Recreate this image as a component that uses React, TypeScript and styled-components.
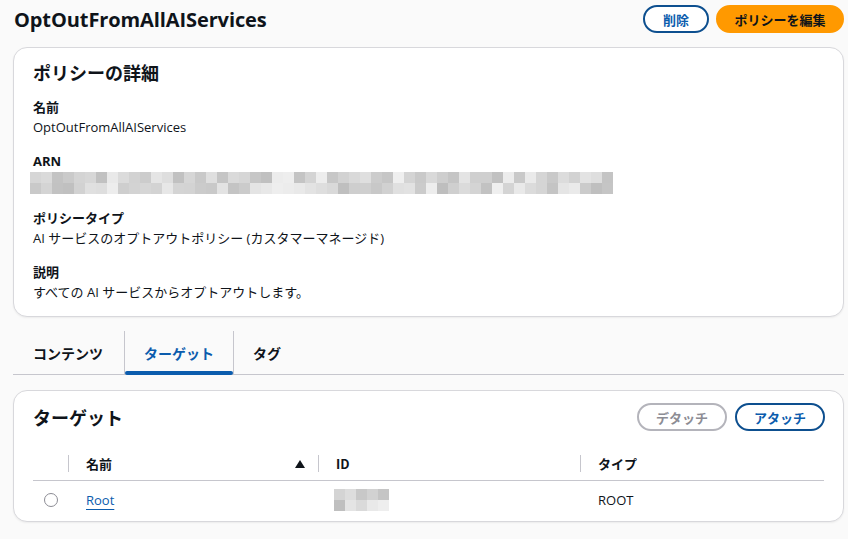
import styled, { createGlobalStyle } from "styled-components";

const GlobalStyle = createGlobalStyle`
  body {
    margin: 0;
    background-color: #fafafa;
    font-family: "Open Sans", "Noto Sans CJK JP", sans-serif;
    color: #0f141a;
  }
`;

export const Page = styled.div`
  width: 848px;
  height: 539px;
  box-sizing: border-box;
  padding: 5px 4px 0 13px;
  overflow: hidden;
`;
export const Header = styled.div`
  display: flex;
  align-items: center;
  justify-content: space-between;
  height: 28px;
`;
export const Title = styled.h1`
  margin: 0 0 0 1px;
  font-size: 20px;
  font-weight: 700;
  letter-spacing: -0.1px;
`;
export const ButtonRow = styled.div<{ $gap?: number }>`
  display: flex;
  gap: ${(p) => p.$gap ?? 7}px;
`;
export const PillButton = styled.button<{ $variant: "normal" | "primary" | "disabled"; $width: number }>`
  height: 28px;
  width: ${(p) => p.$width}px;
  box-sizing: border-box;
  border-radius: 16px;
  font-family: "Noto Sans CJK JP", sans-serif;
  font-size: 13px;
  font-weight: 700;
  padding: 0;
  border: 2px solid
    ${(p) => (p.$variant === "primary" ? "#ff9900" : p.$variant === "disabled" ? "#b4b4bb" : "#0d4f8f")};
  background-color: ${(p) => (p.$variant === "primary" ? "#ff9900" : "#ffffff")};
  color: ${(p) => (p.$variant === "primary" ? "#0f141a" : p.$variant === "disabled" ? "#8c8c94" : "#0b5cad")};
`;
export const Card = styled.div`
  background-color: #ffffff;
  border: 1px solid #d8d8dc;
  border-radius: 14px;
  box-shadow: 0 1px 2px rgba(0, 7, 22, 0.06);
`;
export const DetailCard = styled(Card)`
  margin-top: 14px;
  height: 270px;
  box-sizing: border-box;
  padding: 12px 20px 0 19px;
`;
export const CardHeading = styled.h2`
  margin: 0;
  font-family: "Noto Sans CJK JP", sans-serif;
  font-size: 18px;
  font-weight: 700;
  line-height: 24px;
`;
export const FieldList = styled.div`
  display: flex;
  flex-direction: column;
  gap: 14px;
  margin-top: 13px;
`;
export const Field = styled.div``;
export const Label = styled.div`
  font-size: 13px;
  font-weight: 700;
  line-height: 20px;
`;
export const Value = styled.div`
  font-size: 13px;
  line-height: 20px;
`;
export const Blur = styled.div<{ $cols: number }>`
  display: grid;
  grid-template-columns: repeat(${(p) => p.$cols}, 11px);
  grid-auto-rows: 11px;
`;
export const BlurCell = styled.div``;
export const ArnBlur = styled(Blur)`
  margin: 1px 0 0 -3px;
`;
export const Tabs = styled.div`
  display: flex;
  margin-top: 14px;
  height: 43px;
  border-bottom: 1px solid #c6c6cd;
`;
export const Tab = styled.div<{ $active?: boolean; $first?: boolean }>`
  position: relative;
  display: flex;
  align-items: center;
  padding: 0 19px 0 ${(p) => (p.$first ? 20 : 19)}px;
  font-family: "Noto Sans CJK JP", sans-serif;
  font-size: 14px;
  font-weight: 700;
  color: ${(p) => (p.$active ? "#0b5cad" : "#0f141a")};
  &:first-child {
    padding-right: 21px;
  }
  & + & {
    border-left: 1px solid #c6c6cd;
    background-clip: content-box;
  }
  &::after {
    content: "";
    display: ${(p) => (p.$active ? "block" : "none")};
    position: absolute;
    left: 0;
    right: 0;
    bottom: -1px;
    height: 4px;
    border-radius: 3px;
    background-color: #0b5cad;
  }
`;
export const TargetCard = styled(Card)`
  margin-top: 15px;
  height: 132px;
  box-sizing: border-box;
  padding: 12px 18px 0 19px;
`;
export const TargetHeader = styled.div`
  display: flex;
  align-items: center;
  justify-content: space-between;
  height: 28px;
`;
export const Table = styled.div`
  margin-top: 16px;
  margin-right: 1px;
`;
export const HeadRow = styled.div`
  display: grid;
  grid-template-columns: 35px 250px 262px 1fr;
  height: 33px;
  border-bottom: 1px solid #c6c6cd;
`;
export const HeadCell = styled.div<{ $divider?: boolean }>`
  display: flex;
  align-items: center;
  justify-content: space-between;
  padding: 0 13px 0 18px;
  font-family: "Noto Sans CJK JP", sans-serif;
  font-size: 13px;
  font-weight: 700;
  position: relative;
  &::before {
    content: "";
    display: ${(p) => (p.$divider ? "block" : "none")};
    position: absolute;
    left: 0;
    top: 8px;
    bottom: 8px;
    width: 1px;
    background-color: #c6c6cd;
  }
`;
export const BodyRow = styled.div`
  display: grid;
  grid-template-columns: 35px 250px 262px 1fr;
  height: 37px;
`;
export const BodyCell = styled.div`
  display: flex;
  align-items: center;
  padding-left: 18px;
  font-size: 13px;
`;
export const RadioCell = styled.div`
  display: flex;
  align-items: center;
  padding-left: 11px;
`;
export const Radio = styled.span`
  width: 14px;
  height: 14px;
  box-sizing: border-box;
  border-radius: 50%;
  border: 1.5px solid #8c8c94;
  background-color: #fff;
`;
export const Link = styled.a`
  color: #0b5cad;
  text-decoration: underline;
  text-underline-offset: 4px;
  text-decoration-thickness: 1px;
  font-size: 13px;
`;
export const IdBlur = styled(Blur)`
  margin-left: -2px;
`;

function grays(n: number, seed: number) {
  const out: string[] = [];
  let s = seed;
  for (let i = 0; i < n; i++) {
    s = (s * 9301 + 49297) % 233280;
    const v = 190 + Math.floor((s / 233280) * 50);
    out.push(`rgb(${v},${v},${v})`);
  }
  return out;
}

const arnCells = grays(53 * 2, 7);
const idCells = grays(5 * 2, 31);

function SortUp() {
  return (
    <svg width="10" height="8" viewBox="0 0 10 8">
      <path d="M5 0 L10 8 L0 8 Z" fill="#0f141a" />
    </svg>
  );
}

export default function App() {
  return (
    <>
      <GlobalStyle />
      <Page>
        <Header>
          <Title>OptOutFromAllAIServices</Title>
          <ButtonRow>
            <PillButton $variant="normal" $width={66}>削除</PillButton>
            <PillButton $variant="primary" $width={128}>ポリシーを編集</PillButton>
          </ButtonRow>
        </Header>

        <DetailCard>
          <CardHeading>ポリシーの詳細</CardHeading>
          <FieldList>
            <Field>
              <Label>名前</Label>
              <Value>OptOutFromAllAIServices</Value>
            </Field>
            <Field>
              <Label>ARN</Label>
              <ArnBlur $cols={53}>
                {arnCells.map((c, i) => (
                  <BlurCell key={i} style={{ backgroundColor: c }} />
                ))}
              </ArnBlur>
            </Field>
            <Field>
              <Label>ポリシータイプ</Label>
              <Value>AI サービスのオプトアウトポリシー (カスタマーマネージド)</Value>
            </Field>
            <Field>
              <Label>説明</Label>
              <Value>すべての AI サービスからオプトアウトします。</Value>
            </Field>
          </FieldList>
        </DetailCard>

        <Tabs>
          <Tab $first>コンテンツ</Tab>
          <Tab $active>ターゲット</Tab>
          <Tab>タグ</Tab>
        </Tabs>

        <TargetCard>
          <TargetHeader>
            <CardHeading>ターゲット</CardHeading>
            <ButtonRow $gap={8}>
              <PillButton $variant="disabled" $width={90}>デタッチ</PillButton>
              <PillButton $variant="normal" $width={90}>アタッチ</PillButton>
            </ButtonRow>
          </TargetHeader>
          <Table>
            <HeadRow>
              <HeadCell />
              <HeadCell $divider>
                名前
                <SortUp />
              </HeadCell>
              <HeadCell $divider>ID</HeadCell>
              <HeadCell $divider>タイプ</HeadCell>
            </HeadRow>
            <BodyRow>
              <RadioCell>
                <Radio />
              </RadioCell>
              <BodyCell>
                <Link>Root</Link>
              </BodyCell>
              <BodyCell>
                <IdBlur $cols={5}>
                  {idCells.map((c, i) => (
                    <BlurCell key={i} style={{ backgroundColor: c }} />
                  ))}
                </IdBlur>
              </BodyCell>
              <BodyCell>ROOT</BodyCell>
            </BodyRow>
          </Table>
        </TargetCard>
      </Page>
    </>
  );
}
